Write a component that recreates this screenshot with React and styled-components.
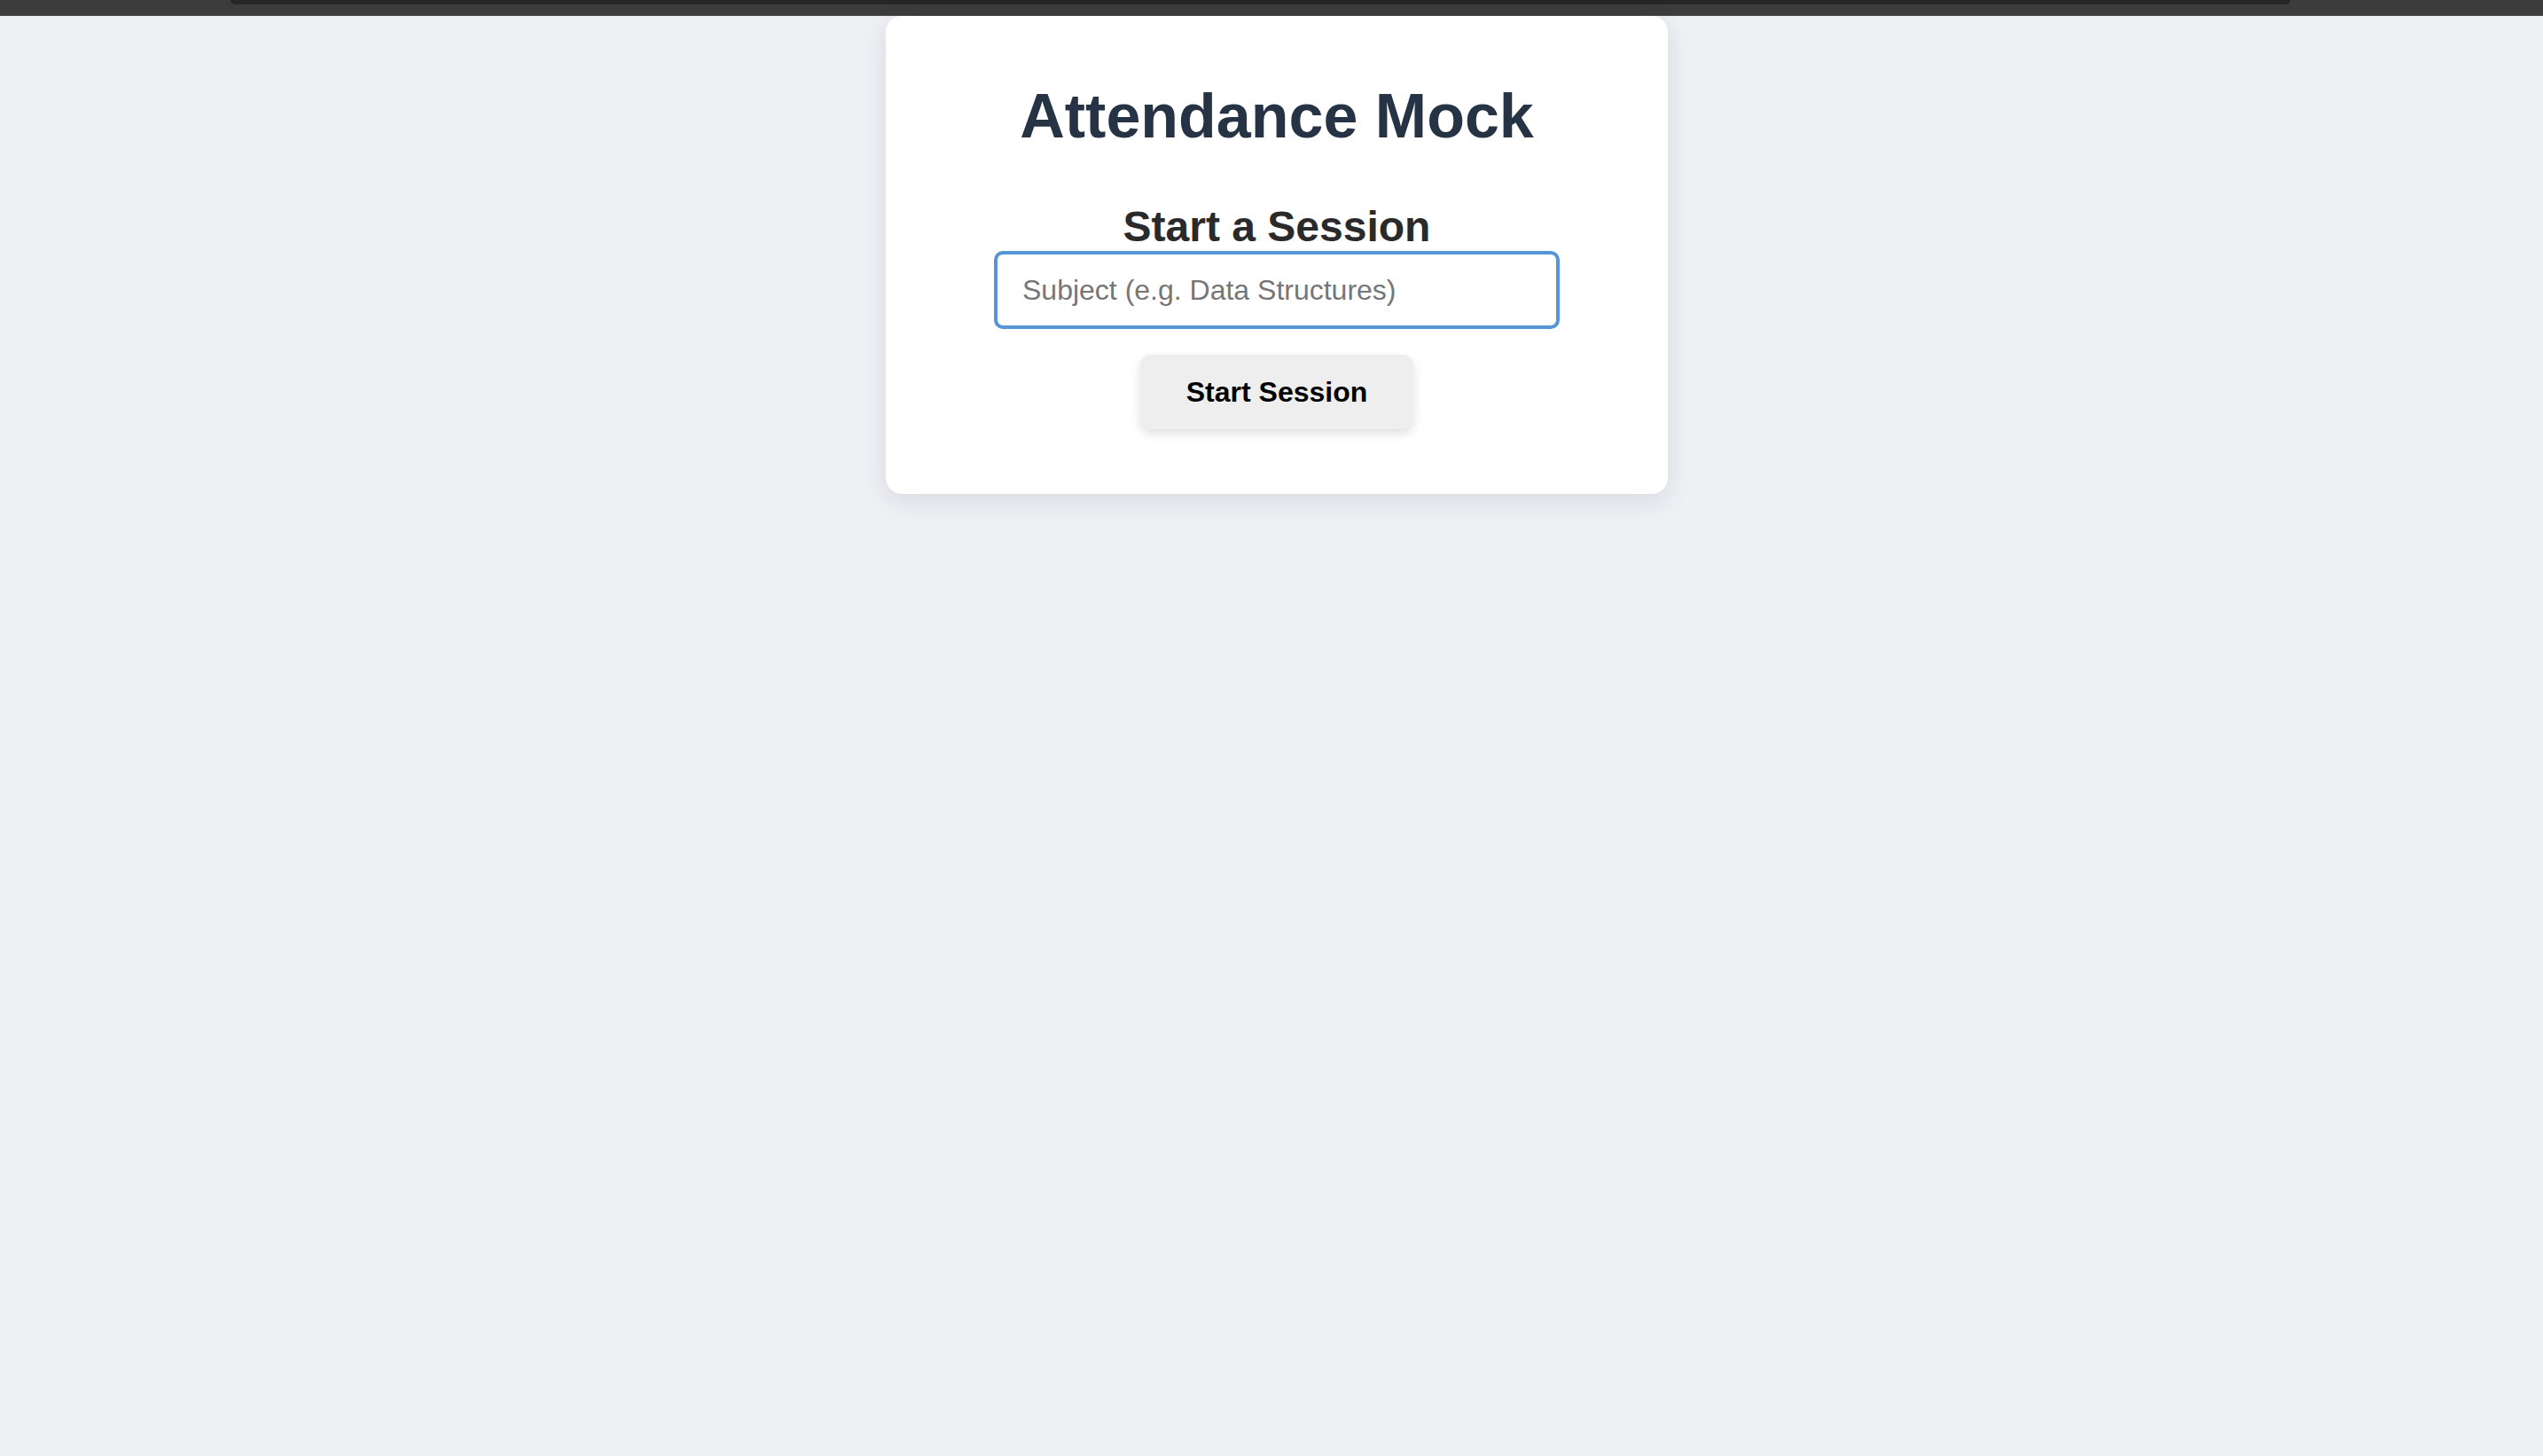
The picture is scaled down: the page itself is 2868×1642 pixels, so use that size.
import React from "react";
import styled, { createGlobalStyle } from "styled-components";

const GlobalStyle = createGlobalStyle`
  html, body {
    margin: 0;
    padding: 0;
    background: #eff0f4;
    font-family: "Liberation Sans", Arial, Helvetica, sans-serif;
  }
  #root {
    min-height: 100vh;
  }
`;

const Chrome = styled.div`
  height: 17px;
  background: #3c3c3c;
  border-bottom: 1px solid #4a4a4a;
  display: flex;
  padding-left: 260px;
`;

const ChromeTab = styled.div`
  width: 2323px;
  height: 5px;
  background: #262626;
  border-radius: 0 0 8px 8px;
`;

const Page = styled.div`
  display: flex;
  justify-content: center;
  padding-left: 12px;
`;

const Card = styled.div`
  width: 882px;
  box-sizing: border-box;
  background: #ffffff;
  border-radius: 18px;
  box-shadow: 0 8px 28px rgba(20, 30, 50, 0.1);
  padding: 73px 0 73px;
  display: flex;
  flex-direction: column;
  align-items: center;
`;

const Title = styled.h1`
  margin: 0 0 57px;
  font-size: 70px;
  font-weight: 700;
  color: #263345;
`;

const Subtitle = styled.h2`
  margin: 0;
  font-size: 48px;
  font-weight: 700;
  color: #2a2a2a;
`;

const SubjectInput = styled.input`
  width: 638px;
  height: 88px;
  box-sizing: border-box;
  border: 4px solid #5596d6;
  border-radius: 10px;
  padding: 0 28px;
  font-family: inherit;
  font-size: 32px;
  color: #222;
  outline: none;
  margin: 0 0 29px;
  &::placeholder {
    color: #767676;
  }
`;

const Button = styled.button`
  height: 84px;
  padding: 0 52px;
  border: none;
  border-radius: 12px;
  background: #eeeeee;
  box-shadow: 0 5px 12px rgba(0, 0, 0, 0.13);
  font-family: inherit;
  font-size: 32px;
  font-weight: 700;
  color: #000;
  cursor: pointer;
`;

export default function App() {
  return (
    <>
      <GlobalStyle />
      <Chrome>
        <ChromeTab />
      </Chrome>
      <Page>
        <Card>
          <Title>Attendance Mock</Title>
          <Subtitle>Start a Session</Subtitle>
          <SubjectInput placeholder="Subject (e.g. Data Structures)" />
          <Button>Start Session</Button>
        </Card>
      </Page>
    </>
  );
}
